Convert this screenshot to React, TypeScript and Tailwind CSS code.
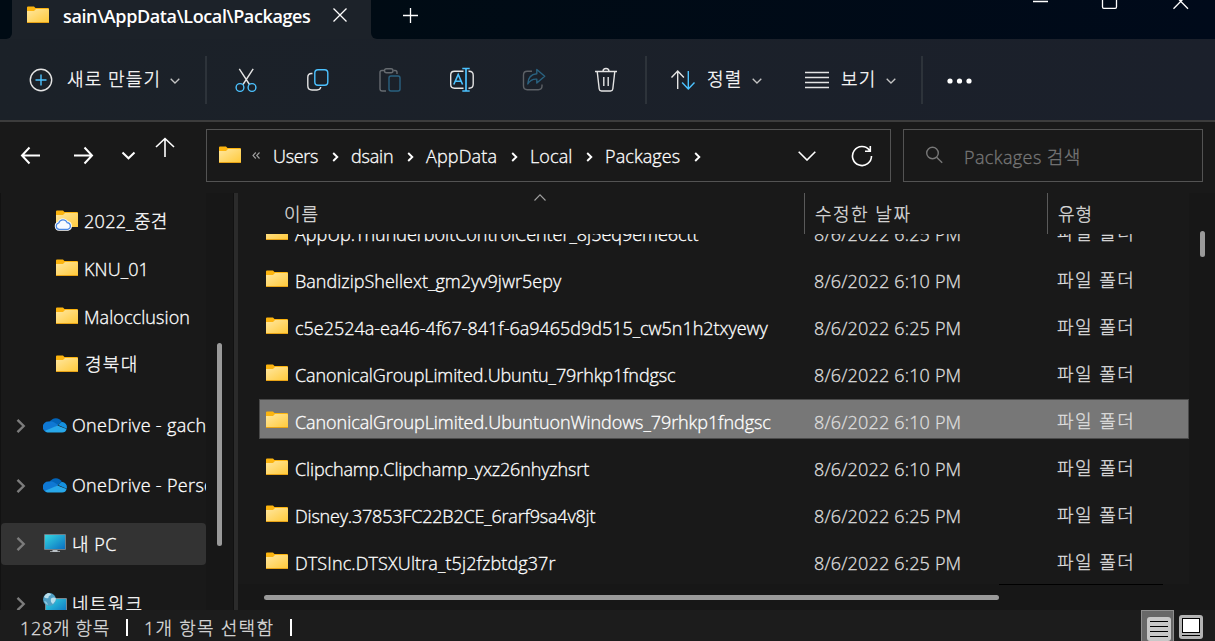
import React from 'react';

interface FileItem {
  name: string;
  modified: string;
  tracking: string;
  selected?: boolean;
}

const files: FileItem[] = [
  { name: 'AppUp.ThunderboltControlCenter_8j5eq9eme6ctt', modified: '8/6/2022 6:25 PM', tracking: 'tracking-[-0.02px]' },
  { name: 'BandizipShellext_gm2yv9jwr5epy', modified: '8/6/2022 6:10 PM', tracking: 'tracking-[0.02px]' },
  { name: 'c5e2524a-ea46-4f67-841f-6a9465d9d515_cw5n1h2txyewy', modified: '8/6/2022 6:25 PM', tracking: 'tracking-[-0.02px]' },
  { name: 'CanonicalGroupLimited.Ubuntu_79rhkp1fndgsc', modified: '8/6/2022 6:10 PM', tracking: 'tracking-[-0.1px]' },
  { name: 'CanonicalGroupLimited.UbuntuonWindows_79rhkp1fndgsc', modified: '8/6/2022 6:10 PM', tracking: 'tracking-[-0.07px]', selected: true },
  { name: 'Clipchamp.Clipchamp_yxz26nhyzhsrt', modified: '8/6/2022 6:10 PM', tracking: 'tracking-[-0.13px]' },
  { name: 'Disney.37853FC22B2CE_6rarf9sa4v8jt', modified: '8/6/2022 6:25 PM', tracking: 'tracking-[-0.19px]' },
  { name: 'DTSInc.DTSXUltra_t5j2fzbtdg37r', modified: '8/6/2022 6:25 PM', tracking: 'tracking-[0.11px]' },
];

/* ---------- Icons ---------- */

const FolderIcon = ({ className = '' }: { className?: string }) => (
  <svg className={`shrink-0 ${className}`} width="24" height="18" viewBox="0 0 24 18">
    <defs>
      <linearGradient id="folder" x1="0" y1="0" x2="1" y2="1">
        <stop offset="0" stopColor="#ffe7a0" />
        <stop offset="1" stopColor="#ffca3c" />
      </linearGradient>
    </defs>
    <path d="M1 1.5Q1 .5 2 .5h6L9.5 2H22q1 0 1 1v5H1z" fill="#fcb40f" />
    <path d="M1 5h7l2-2h12q1 0 1 1v12H1z" fill="url(#folder)" />
    <path d="M1 16h22v1H1z" fill="#e8a317" />
  </svg>
);

const CloudFolderIcon = () => (
  <svg className="shrink-0" width="24" height="22" viewBox="0 0 24 22">
    <path d="M2 1.5Q2 .5 3 .5h6L10.5 2H23q1 0 1 1v5H2z" fill="#fcb40f" />
    <path d="M2 5h7l2-2h12q1 0 1 1v13H2z" fill="url(#folder)" />
    <path
      d="M5.2 19.3a3.2 3.2 0 0 1-.5-6.3 4.5 4.5 0 0 1 8.4-.4 3.4 3.4 0 0 1 .7 6.7z"
      fill="#fff"
      stroke="#fff"
      strokeWidth="3"
    />
    <path
      d="M5.2 19.3a3.2 3.2 0 0 1-.5-6.3 4.5 4.5 0 0 1 8.4-.4 3.4 3.4 0 0 1 .7 6.7z"
      fill="#f7faff"
      stroke="#4a88e4"
      strokeWidth="1.2"
    />
  </svg>
);

const OneDriveIcon = () => (
  <svg className="shrink-0" width="24" height="16" viewBox="0 0 24 16">
    <path d="M7 5A6.5 6.5 0 0 1 18.7 5L13 9z" fill="#0364b8" />
    <path d="M5 15.5A5 5 0 0 1 5.5 4.500Q8 3.6 10.5 5l5 3L4 15.5z" fill="#0f78d4" />
    <path d="M15 8l3.7-3.2a5.500 5.500 0 0 1 5 7z" fill="#1490df" />
    <path d="M2 13.7L14.5 8.5l9 3.5q-.6 3.5-4.500 3.500H5q-2 0-3-1.8z" fill="#28a8ea" />
  </svg>
);

const PcIcon = () => (
  <svg className="shrink-0" width="24" height="20" viewBox="0 0 24 20">
    <defs>
      <linearGradient id="screen" x1="0" y1="0" x2="1" y2="1">
        <stop offset="0" stopColor="#35d6e0" />
        <stop offset="1" stopColor="#0a6fc2" />
      </linearGradient>
    </defs>
    <rect x="1" y="1" width="22" height="16" rx="1" fill="#6f7f89" />
    <rect x="2" y="2" width="20" height="14" fill="url(#screen)" />
    <path d="M9.500 17h5v1.300H17V19H7v-.700h2.500z" fill="#b9c0c5" />
  </svg>
);

const NetworkIcon = () => (
  <svg className="shrink-0" width="26" height="24" viewBox="0 0 26 24">
    <rect x="3" y="6" width="22" height="17" rx="1" fill="#7b8790" />
    <rect x="4" y="7" width="20" height="15" fill="url(#screen)" />
    <circle cx="7.5" cy="7.5" r="6.5" fill="#4f9fc4" />
    <path d="M2 5q1-3 4-4 3 0 3 2-3 1-2.500 3Q4 7 2 5zM9 6.500q3-2 5 0 0 3-3 5.500-3-2-2-5.500z" fill="#b8deec" />
    <path d="M2 9q3 0 4 4-3-1-4-4z" fill="#8cc7de" />
  </svg>
);

const Chevron = ({ className = '', width = 10, height = 6, stroke = 1.3, up = false }) => (
  <svg className={`shrink-0 ${className}`} width={width} height={height} viewBox={`0 0 ${width} ${height}`} fill="none" stroke="currentColor" strokeWidth={stroke}>
    <path d={up ? `M.5 ${height - 0.5}L${width / 2} .8 ${width - 0.5} ${height - 0.5}` : `M.7 .7L${width / 2} ${height - 1} ${width - 0.7} .7`} />
  </svg>
);

const Expander = () => (
  <svg className="shrink-0 text-[#7c7c7c]" width="10" height="16" viewBox="0 0 10 16" fill="none" stroke="currentColor" strokeWidth="2.4">
    <path d="M1.5 1.8L7.7 8l-6.2 6.2" />
  </svg>
);

const Crumb = () => (
  <svg className="shrink-0" width="7" height="10" viewBox="0 0 7 10" fill="none" stroke="#fff" strokeWidth="1.9">
    <path d="M1.2 1L5.300 5 1.2 9" />
  </svg>
);

/* Toolbar glyphs share a 26px box */
const Glyph = ({ children, className = '' }: { children: React.ReactNode; className?: string }) => (
  <svg className={`shrink-0 ${className}`} width="26" height="26" viewBox="0 0 26 26" fill="none" stroke="#e4e4e4" strokeWidth="1.4">
    {children}
  </svg>
);

const BLUE = '#4cc2ff';

/* ---------- Title bar ---------- */

const TitleBar = () => (
  <div className="flex h-[39px] shrink-0 bg-[#1c2229]">
    <div className="w-3 rounded-br-[6px] bg-[#000b14]" />
    <div className="flex w-[359px] items-start">
      <FolderIcon className="ml-3.5 mt-1.5" />
      <span className="ml-[13px] mt-1 w-[249px] whitespace-nowrap text-[18px] font-semibold leading-6 tracking-[-0.38px]">
        sain\AppData\Local\Packages
      </span>
      <svg className="ml-[21px] mt-2" width="14" height="14" viewBox="0 0 14 14" stroke="#fff" strokeWidth="1.3">
        <path d="M.5 .5l13 13M13.5 .5l-13 13" />
      </svg>
    </div>
    <div className="flex flex-1 items-start rounded-bl-[6px] bg-gradient-to-r from-[#000b14] to-[#000a1a]">
      <svg className="ml-8 mt-2" width="15" height="15" viewBox="0 0 15 15" stroke="#fff" strokeWidth="1.3">
        <path d="M7.5 0v15M0 7.5h15" />
      </svg>
      <svg className="ml-auto mr-[26px]" width="156" height="12" viewBox="0 0 156 12" fill="none" stroke="#fff" strokeWidth="1.3">
        <path d="M0 1.500h15M69.500 -5v12q0 1.300 1.300 1.300h11.400q1.300 0 1.300-1.300v-12" />
        <path d="M140.500 8.700L155 -6M155 8.700L140.500 -6" />
      </svg>
    </div>
  </div>
);

/* ---------- Command bar ---------- */

const Separator = ({ className = '' }: { className?: string }) => <div className={`h-12 w-0.5 shrink-0 bg-[#2d333a] ${className}`} />;

const CommandBar = () => (
  <div className="flex h-[83px] shrink-0 items-center border-b-2 border-[#3c3c3c] bg-gradient-to-r from-[#1b2128] to-[#1b202b] text-[18px]">
    <Glyph className="ml-7">
      <circle cx="13" cy="13" r="10.7" />
      <path d="M13 7.5v11M7.5 13h11" stroke={BLUE} />
    </Glyph>
    <span className="ml-[13px] w-[98px] whitespace-nowrap tracking-[1.1px]">새로 만들기</span>
    <Chevron className="ml-[5px] mt-0.5 text-[#c4c4c4]" />
    <Separator className="ml-[25px]" />

    <Glyph className="ml-[26px]">
      <path d="M6.3 1.8L16.5 17.5M20.2 1.8L10 17.5" />
      <circle cx="7" cy="20.5" r="3.9" stroke={BLUE} />
      <circle cx="19" cy="20.5" r="3.9" stroke={BLUE} />
    </Glyph>
    <Glyph className="ml-[46px]">
      <path d="M7.5 6.5h-1Q2.800 6.5 2.800 10.300v8.500q0 4.200 4.200 4.200h5q3.300 0 3.800-3" />
      <rect x="9.8" y="2.8" width="13" height="15.5" rx="3.2" stroke={BLUE} />
    </Glyph>
    <Glyph className="ml-[46px]">
      <g stroke="#666b70">
        <path d="M7.5 3.5H5Q3 3.5 3 5.500v16.200Q3 24 5.300 24H9M16.500 3.500H18q2 0 2 2V7" />
        <rect x="7.5" y="1.7" width="8.5" height="4" rx="2" />
      </g>
      <rect x="12" y="9" width="11" height="15" rx="2" stroke="#2a6280" />
    </Glyph>
    <Glyph className="ml-[46px]">
      <path d="M14.5 4.3H5.500Q1.700 4.300 1.700 8v9.500q0 3.700 3.800 3.700h9M19.500 4.300h.5q4.200 0 4.200 4V17q0 4.200-4.200 4.200h-.500" />
      <path d="M17 1.5v22.5M13.3 1.5h7.4M13.3 24h7.400" stroke={BLUE} strokeWidth="1.7" />
      <path d="M4.8 17.5L9.2 7.500l4.400 10M6.300 14.300h5.800" stroke={BLUE} strokeWidth="1.6" />
    </Glyph>
    <Glyph className="ml-[46px]">
      <path d="M11 4.3H6.300q-3.800 0-3.800 3.700v11q0 3.700 3.800 3.700h11q3.700 0 3.700-3.700v-1.500" stroke="#5d6166" />
      <path d="M15.800 2.500l7.900 6.700-7.900 6.800v-3.800q-5.800-.500-9 4.800 .300-9.500 9-10.200z" stroke="#2a6280" strokeLinejoin="round" />
    </Glyph>
    <Glyph className="ml-[46px]">
      <path d="M2 4.500h22M4.200 4.500l2 17.500q.3 2 2.300 2h9q2 0 2.300-2l2-17.500M10 4.500q0-3 3-3t3 3M10.800 10v9M15.200 10v9" />
    </Glyph>

    <Separator className="ml-[26px]" />
    <Glyph className="ml-[23px]">
      <path d="M7.7 22V4M1.5 10.5L7.700 4l6.200 6.500" />
      <path d="M18.3 4v18M12.1 15.5l6.200 6.500 6.200-6.500" stroke={BLUE} />
    </Glyph>
    <span className="ml-[11px] w-[38px] whitespace-nowrap tracking-[1.2px]">정렬</span>
    <Chevron className="ml-[7px] mt-0.5 text-[#c4c4c4]" />
    <Glyph className="ml-[42px]">
      <path d="M1 5.500h24M1 10.500h24M1 15.500h24M1 20.500h24" />
    </Glyph>
    <span className="ml-[11px] w-[38px] whitespace-nowrap tracking-[1.2px]">보기</span>
    <Chevron className="ml-[7px] mt-0.5 text-[#c4c4c4]" />
    <Separator className="ml-[25px]" />
    <svg className="ml-6 mt-0.5" width="25" height="6" viewBox="0 0 25 6" fill="#fff">
      <circle cx="3" cy="3" r="2.6" />
      <circle cx="12.5" cy="3" r="2.6" />
      <circle cx="22" cy="3" r="2.6" />
    </svg>
  </div>
);

/* ---------- Address bar ---------- */

const crumbs = [
  { label: 'Users', width: 'w-[58px]', tracking: 'tracking-[-0.3px]' },
  { label: 'dsain', width: 'w-[55px]', tracking: 'tracking-[-0.2px]' },
  { label: 'AppData', width: 'w-[84px]', tracking: 'tracking-[0.15px]' },
  { label: 'Local', width: 'w-[55px]', tracking: 'tracking-[0.1px]' },
  { label: 'Packages', width: 'w-[88px]', tracking: 'tracking-[0.1px]' },
];

const AddressBar = () => (
  <div className="flex h-[70px] shrink-0 items-start pt-[7px]">
    <svg className="ml-5 mt-2 shrink-0" width="160" height="36" viewBox="0 0 160 36" fill="none" stroke="#fff" strokeWidth="2">
      <path d="M20 18.500H2M9.500 10.500L2 18.500l7.500 8" />
      <path d="M54 18.500h18M64.500 10.500l7.500 8-7.500 8" />
      <path d="M102.500 15.500l6 5.800 6-5.800" />
      <path d="M145 20V1.500M136 10l9-8.500 9 8.500" strokeWidth="1.6" />
    </svg>
    <div className="ml-[26px] flex h-[53px] w-[685px] items-center border border-[#535353]">
      <FolderIcon className="mb-0.5 ml-[11px]" />
      <svg className="ml-[10px]" width="8" height="7" viewBox="0 0 8 7" fill="none" stroke="#a0a0a0" strokeWidth="1.1">
        <path d="M3.800 .5L1 3.500l2.800 3M7.500 .5l-2.800 3 2.800 3" />
      </svg>
      <div className="ml-[13px] flex items-center text-[18px] leading-6">
        {crumbs.map((crumb) => (
          <React.Fragment key={crumb.label}>
            <span className={`whitespace-nowrap ${crumb.width} ${crumb.tracking}`}>{crumb.label}</span>
            <span className="mt-0.5 w-5 pl-px">
              <Crumb />
            </span>
          </React.Fragment>
        ))}
      </div>
      <Chevron className="ml-auto" width={18} height={10} stroke={1.6} />
      <svg className="ml-[35px] mr-[17px]" width="22" height="22" viewBox="0 0 22 22" fill="none" stroke="#fff" strokeWidth="1.6">
        <path d="M20.500 11A9.500 9.500 0 1 1 18.500 5.200M19.300 1v5.300H14" />
      </svg>
    </div>
    <div className="ml-3 flex h-[53px] w-[300px] items-center border border-[#535353] text-[#777]">
      <svg className="mb-0.5 ml-[21px]" width="18" height="18" viewBox="0 0 18 18" fill="none" stroke="currentColor" strokeWidth="1.4">
        <circle cx="7.5" cy="7" r="5.8" />
        <path d="M11.600 11.200l5.600 5.600" />
      </svg>
      <span className="ml-[21px] mt-0.5 text-[18px] leading-6 tracking-[0.4px]">Packages 검색</span>
    </div>
  </div>
);

/* ---------- Navigation pane ---------- */

const Sidebar = () => (
  <div className="flex w-[233px] shrink-0 overflow-hidden text-[18px] leading-6">
    <div className="w-[206px] shrink-0 overflow-hidden whitespace-nowrap border-l border-[#121212] pt-1">
      <div className="flex h-12 items-center pl-[53px]">
        <CloudFolderIcon />
        <span className="ml-[6px] tracking-[0.3px]">2022_중견</span>
      </div>
      <div className="flex h-12 items-center pl-[54px]">
        <FolderIcon className="mb-0.5" />
        <span className="ml-[5px] tracking-[0.1px]">KNU_01</span>
      </div>
      <div className="flex h-12 items-center pl-[54px]">
        <FolderIcon className="mb-0.5" />
        <span className="ml-[5px] tracking-[0.07px]">Malocclusion</span>
      </div>
      <div className="flex h-12 items-center pl-[54px]">
        <FolderIcon className="mb-0.5" />
        <span className="mb-0.5 ml-[6px] tracking-[1.3px]">경북대</span>
      </div>
      <div className="mt-[7px] flex h-[60px] items-center pl-[15px]">
        <Expander />
        <span className="mb-0.5 ml-[17px]"><OneDriveIcon /></span>
        <span className="mb-0.5 ml-[5px] tracking-[0.33px]">OneDrive - gach</span>
      </div>
      <div className="flex h-[60px] items-center pl-[15px]">
        <Expander />
        <span className="mb-0.5 ml-[17px]"><OneDriveIcon /></span>
        <span className="mb-0.5 ml-[5px] tracking-[0.33px]">OneDrive - Personal</span>
      </div>
      <div className="mt-[7px] flex h-[42px] items-center rounded-sm bg-[#333] pl-[15px]">
        <Expander />
        <span className="mb-0.5 ml-[17px]"><PcIcon /></span>
        <span className="ml-[5px] tracking-[0.5px]">내 PC</span>
      </div>
      <div className="mt-[9px] flex h-[60px] items-center pl-[15px]">
        <Expander />
        <span className="ml-[16px]"><NetworkIcon /></span>
        <span className="ml-1 tracking-[1.3px]">네트워크</span>
      </div>
    </div>
    <div className="w-[27px] bg-[#171717] pl-[11px] pt-[150px]">
      <div className="h-[203px] w-[5px] rounded-full bg-[#9a9a9a]" />
    </div>
  </div>
);

/* ---------- File list ---------- */

const FileRow = ({ file }: { file: FileItem }) => (
  <div className="flex h-[47px] items-start pl-[21px] pt-[3px]">
    <div
      className={`flex h-10 w-[931px] items-center whitespace-nowrap border pl-[5px] ${
        file.selected ? 'border-[#4a4a4a] bg-[#777]' : 'border-transparent'
      }`}
    >
      <FolderIcon className="mt-0.5" />
      <span className={`ml-[6px] mt-1.5 w-[519px] ${file.tracking}`}>{file.name}</span>
      <span className="mt-1.5 w-[243px] tracking-[0.18px] text-[#dedede]">{file.modified}</span>
      <span className="mt-1 tracking-[1.5px] text-[#dedede]">파일 폴더</span>
    </div>
  </div>
);

const FileList = () => (
  <div className="flex min-w-0 flex-1 text-[18px] leading-6">
    <div className="flex w-[951px] flex-col">
      <div className="flex h-[41px] shrink-0 text-[#dedede]">
        <div className="w-[567px] border-r border-[#5a5a5a]">
          <Chevron className="ml-[296px] mt-[1px] text-[#a0a0a0]" width={12} height={7} stroke={1.1} up />
          <div className="ml-[46px] mt-px tracking-[1px]">이름</div>
        </div>
        <div className="w-[243px] border-r border-[#5a5a5a] pl-[10px] pt-[9px] tracking-[1.5px]">수정한 날짜</div>
        <div className="pl-[10px] pt-[9px] tracking-[1px]">유형</div>
      </div>
      <div className="h-[350px] overflow-hidden">
        <div className="-mt-[26px]">
          {files.map((file) => (
            <FileRow key={file.name} file={file} />
          ))}
        </div>
      </div>
      <div className="flex flex-1 items-start bg-[#171717] pl-[26px]">
        <div className="mt-[11px] h-[5px] w-[735px] rounded-full bg-[#9a9a9a]" />
        <div className="h-px w-[164px] bg-black" />
      </div>
    </div>
    <div className="flex-1 bg-[#171717] pl-[11px] pt-[38px]">
      <div className="h-[26px] w-[5px] rounded-full bg-[#9a9a9a]" />
    </div>
  </div>
);

/* ---------- Status bar ---------- */

const StatusBar = () => (
  <div className="flex h-[31px] shrink-0 items-start bg-[#1c1c1c] text-[18px] leading-6 text-[#dedede]">
    <span className="ml-5 mt-[6px] w-[106px] whitespace-nowrap tracking-[0.7px]">128개 항목</span>
    <div className="mt-[9px] h-[17px] w-0.5 bg-white" />
    <span className="ml-[16px] mt-[6px] w-[146px] whitespace-nowrap tracking-[1.25px]">1개 항목 선택함</span>
    <div className="mt-[9px] h-[17px] w-0.5 bg-white" />
    <div className="ml-auto h-8 w-[33px] border border-[#8f8f8f] bg-[#686868] pl-[5px] pt-1.5">
      <svg width="24" height="25" viewBox="0 0 24 25">
        <rect width="24" height="24" rx="3" fill="#c8c8c8" />
        <path d="M3 4.500h18M3 9.500h18M3 14.500h18M3 19.500h18" stroke="#000" />
      </svg>
    </div>
    <svg className="ml-[5px] mr-3 mt-[5px]" width="24" height="24" viewBox="0 0 24 24">
      <rect width="24" height="24" rx="3" fill="#b4b4b4" />
      <rect x="3.5" y="3.5" width="17" height="14" fill="#fff" stroke="#000" />
      <path d="M3 20.500h18" stroke="#000" />
    </svg>
  </div>
);

export default function App() {
  return (
    <div className='flex h-[641px] w-[1215px] flex-col overflow-hidden bg-[#191919] font-["Open_Sans","Noto_Sans_CJK_KR",sans-serif] font-light text-white'>
      <TitleBar />
      <div className="[-webkit-text-stroke:0.3px]">
        <CommandBar />
        <AddressBar />
        <div className="flex h-[418px] shrink-0 pt-px">
          <Sidebar />
          <div className="w-[5px] shrink-0 border-l border-[#111] bg-[#2b2b2b]" />
          <FileList />
        </div>
        <StatusBar />
      </div>
    </div>
  );
}
